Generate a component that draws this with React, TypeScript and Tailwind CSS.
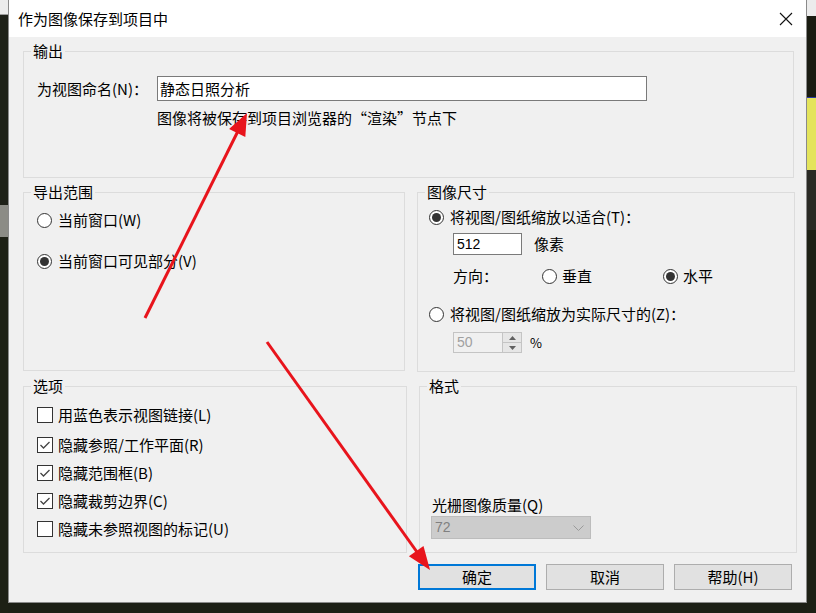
import React from 'react';

function Radio({ checked = false }: { checked?: boolean }) {
  return (
    <span className="w-[15px] h-[15px] rounded-full border border-[#333333] bg-white flex items-center justify-center shrink-0">
      {checked && <span className="w-[9px] h-[9px] rounded-full bg-[#333333]" />}
    </span>
  );
}

function Checkbox({ checked = false }: { checked?: boolean }) {
  return (
    <span className="w-[16px] h-[16px] border border-[#333333] bg-white flex items-center justify-center shrink-0">
      {checked && (
        <svg width="14" height="14" viewBox="0 0 14 14">
          <path d="M2.5 7 L5.5 10 L11.5 4" fill="none" stroke="#444444" strokeWidth="1.3" />
        </svg>
      )}
    </span>
  );
}

function GroupLabel({ children }: { children: React.ReactNode }) {
  return (
    <div className="-mt-[9px] ml-[7px] px-[2px] w-fit bg-[#f0f0f0] leading-[16px]">{children}</div>
  );
}

export default function App() {
  return (
    <div className="relative w-[816px] h-[613px] overflow-hidden flex bg-[#1c1f15] text-black text-[15px] font-['Noto_Sans_CJK_SC','Noto_Sans',sans-serif]">
      {/* left scenery strip */}
      <div className="w-[8px] flex flex-col">
        <div className="h-[15px] bg-[#ececec] border-b border-[#9c9c9c]" />
        <div className="h-[190px] bg-[#1e2118]" />
        <div className="h-[32px] bg-[#8c8c86]" />
        <div className="flex-1 bg-[#1d2015]" />
      </div>

      {/* dialog */}
      <div className="w-[799px] h-[603px] flex flex-col border-x border-b border-[#8a8a8a] bg-[#f0f0f0]">
        {/* title bar */}
        <div className="h-[37px] bg-white flex items-center justify-between pl-[9px] pr-[13px] shrink-0">
          <span className="leading-[20px] text-[15px]">作为图像保存到项目中</span>
          <svg width="14" height="14" viewBox="0 0 14 14">
            <path d="M1 1 L13 13 M13 1 L1 13" stroke="#111111" strokeWidth="1.1" />
          </svg>
        </div>

        {/* body */}
        <div className="flex-1 pl-[14px] pt-[14px] flex flex-col">
          {/* 输出 */}
          <div className="w-[771px] h-[127px] border border-[#dcdcdc] flex flex-col">
            <GroupLabel>输出</GroupLabel>
            <div className="mt-[17px] pl-[13px] flex items-center">
              <span className="w-[120px] leading-[20px]">为视图命名(N)：</span>
              <div className="w-[490px] h-[25px] border border-[#7a7a7a] bg-white pl-[2px] flex items-center leading-[20px]">
                静态日照分析
              </div>
            </div>
            <div className="mt-[7px] pl-[133px] leading-[20px]">图像将被保存到项目浏览器的“渲染”节点下</div>
          </div>

          {/* row 2 */}
          <div className="mt-[14px] flex items-start gap-[12px]">
            <div className="w-[382px] h-[179px] border border-[#dcdcdc] flex flex-col">
              <GroupLabel>导出范围</GroupLabel>
              <div className="mt-[10px] pl-[13px] h-[20px] flex items-center gap-[6px]">
                <Radio />
                <span className="leading-[20px]">当前窗口(W)</span>
              </div>
              <div className="mt-[21px] pl-[13px] h-[20px] flex items-center gap-[6px]">
                <Radio checked />
                <span className="leading-[20px]">当前窗口可见部分(V)</span>
              </div>
            </div>

            <div className="w-[378px] h-[180px] border border-[#dcdcdc] flex flex-col">
              <GroupLabel>图像尺寸</GroupLabel>
              <div className="mt-[7px] pl-[11px] h-[20px] flex items-center gap-[6px]">
                <Radio checked />
                <span className="leading-[20px]">将视图/图纸缩放以适合(T)：</span>
              </div>
              <div className="mt-[6px] pl-[35px] flex items-center gap-[12px]">
                <div className="w-[69px] h-[22px] border border-[#7a7a7a] bg-white pl-[3px] flex items-center text-[14px] font-['Liberation_Sans',sans-serif]">
                  512
                </div>
                <span className="leading-[20px]">像素</span>
              </div>
              <div className="mt-[11px] pl-[35px] h-[20px] flex items-center">
                <span className="w-[89px] leading-[20px]">方向：</span>
                <div className="w-[121px] flex items-center gap-[5px]">
                  <Radio />
                  <span className="leading-[20px]">垂直</span>
                </div>
                <div className="flex items-center gap-[5px]">
                  <Radio checked />
                  <span className="leading-[20px]">水平</span>
                </div>
              </div>
              <div className="mt-[18px] pl-[11px] h-[20px] flex items-center gap-[6px]">
                <Radio />
                <span className="leading-[20px]">将视图/图纸缩放为实际尺寸的(Z)：</span>
              </div>
              <div className="mt-[8px] pl-[35px] flex items-center gap-[8px]">
                <div className="w-[69px] h-[21px] border border-[#c4c4c4] bg-[#f0f0f0] flex">
                  <span className="flex-1 pl-[3px] flex items-center text-[14px] text-[#a0a0a0] font-['Liberation_Sans',sans-serif]">
                    50
                  </span>
                  <div className="w-[19px] flex flex-col border-l border-[#c4c4c4]">
                    <div className="flex-1 bg-[#e6e6e6] border-b border-[#c4c4c4] flex items-center justify-center">
                      <svg width="7" height="4" viewBox="0 0 7 4">
                        <path d="M0 4 L3.5 0 L7 4 Z" fill="#606060" />
                      </svg>
                    </div>
                    <div className="flex-1 bg-[#e6e6e6] flex items-center justify-center">
                      <svg width="7" height="4" viewBox="0 0 7 4">
                        <path d="M0 0 L3.5 4 L7 0 Z" fill="#606060" />
                      </svg>
                    </div>
                  </div>
                </div>
                <span className="text-[13px] leading-[20px]">%</span>
              </div>
            </div>
          </div>

          {/* row 3 */}
          <div className="mt-[14px] flex items-start gap-[12px]">
            <div className="w-[384px] h-[167px] border border-[#dcdcdc] flex flex-col">
              <GroupLabel>选项</GroupLabel>
              <div className="mt-[11px] pl-[13px] flex flex-col">
                <div className="h-[20px] flex items-center gap-[5px]">
                  <Checkbox />
                  <span className="leading-[20px]">用蓝色表示视图链接(L)</span>
                </div>
                <div className="mt-[10px] h-[20px] flex items-center gap-[5px]">
                  <Checkbox checked />
                  <span className="leading-[20px]">隐藏参照/工作平面(R)</span>
                </div>
                <div className="mt-[8px] h-[20px] flex items-center gap-[5px]">
                  <Checkbox checked />
                  <span className="leading-[20px]">隐藏范围框(B)</span>
                </div>
                <div className="mt-[8px] h-[20px] flex items-center gap-[5px]">
                  <Checkbox checked />
                  <span className="leading-[20px]">隐藏裁剪边界(C)</span>
                </div>
                <div className="mt-[8px] h-[20px] flex items-center gap-[5px]">
                  <Checkbox />
                  <span className="leading-[20px]">隐藏未参照视图的标记(U)</span>
                </div>
              </div>
            </div>

            <div className="w-[378px] h-[167px] border border-[#dcdcdc] flex flex-col">
              <GroupLabel>格式</GroupLabel>
              <div className="mt-[101px] pl-[12px] h-[20px] leading-[20px]">光栅图像质量(Q)</div>
              <div className="mt-[1px] ml-[11px] w-[160px] h-[23px] bg-[#cccccc] border border-[#bcbcbc] flex items-center justify-between pl-[3px] pr-[6px]">
                <span className="text-[14px] text-[#808080] font-['Liberation_Sans',sans-serif]">72</span>
                <svg width="11" height="6" viewBox="0 0 11 6">
                  <path d="M0.5 0.5 L5.5 5.5 L10.5 0.5" fill="none" stroke="#9a9a9a" strokeWidth="1" />
                </svg>
              </div>
            </div>
          </div>

          {/* buttons */}
          <div className="mt-[11px] pr-[14px] flex justify-end gap-[10px]">
            <button className="w-[118px] h-[26px] bg-[#e1e1e1] border-2 border-[#0078d7] flex items-center justify-center leading-[20px]">
              确定
            </button>
            <button className="w-[118px] h-[26px] bg-[#e1e1e1] border border-[#adadad] flex items-center justify-center leading-[20px]">
              取消
            </button>
            <button className="w-[118px] h-[26px] bg-[#e1e1e1] border border-[#adadad] flex items-center justify-center leading-[20px]">
              帮助(H)
            </button>
          </div>
        </div>
      </div>

      {/* right scenery strip */}
      <div className="flex-1 flex flex-col">
        <div className="h-[16px] bg-[#ececec]" />
        <div className="h-[81px] bg-[#1a1c12]" />
        <div className="h-[73px] bg-[#e4e45c] border-t border-[#2a3aa8]" />
        <div className="h-[60px] bg-[#2a2a24]" />
        <div className="flex-1 bg-[#1d2015]" />
      </div>

      {/* red annotation arrows */}
      <svg className="absolute inset-0 pointer-events-none" width="816" height="613" viewBox="0 0 816 613">
        <line x1="145" y1="318" x2="238" y2="131" stroke="#e8141c" strokeWidth="3" />
        <polygon points="247,113 245.3,137 229.1,129" fill="#e8141c" />
        <line x1="267" y1="342" x2="417" y2="552" stroke="#e8141c" strokeWidth="3" />
        <polygon points="430,570 408.9,556.3 423.5,545.9" fill="#e8141c" />
      </svg>
    </div>
  );
}
